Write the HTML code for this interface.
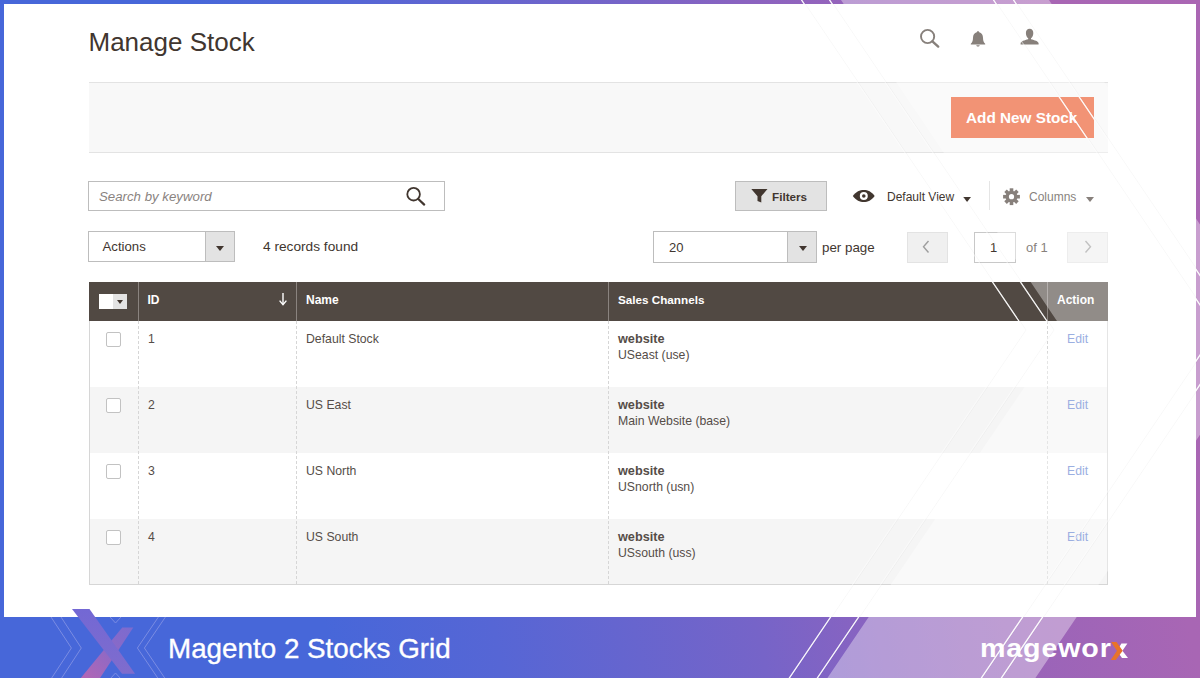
<!DOCTYPE html>
<html><head><meta charset="utf-8">
<style>
*{box-sizing:border-box;margin:0;padding:0}
html,body{width:1200px;height:678px;overflow:hidden}
body{position:relative;font-family:"Liberation Sans",sans-serif;color:#41362f;
 background:linear-gradient(78deg,#4767d9 0%,#4767d9 25%,#5666d5 37.5%,#7664c8 57.1%,#8a63c0 66%,#9a64b9 76.8%,#a866b4 89.3%,#aa66b3 100%)}
.abs{position:absolute}
#panel{position:absolute;left:4px;top:4px;width:1192px;height:613px;background:#fff}
.t{position:absolute;white-space:nowrap;line-height:1}
.cell{font-size:12.25px;color:#554d48}
.hd{font-size:12px;font-weight:bold;color:#fff}
.cb{width:15px;height:15px;border:1px solid #c2c2c2;border-radius:2px;background:#fff}
.tri{width:0;height:0;border-left:4px solid transparent;border-right:4px solid transparent;border-top:5px solid #41362f}
</style></head>
<body>
<div id="panel"></div>
<!-- title -->
<div class="t" style="left:88.5px;top:29px;font-size:26px;color:#41362f">Manage Stock</div>
<!-- header icons -->
<svg class="abs" style="left:915px;top:25px" width="130" height="26" viewBox="915 25 130 26">
 <circle cx="927.6" cy="36.5" r="6.6" fill="none" stroke="#41362f" stroke-width="1.9"/>
 <path d="M932.4 41.4L938.2 46.6" stroke="#41362f" stroke-width="2.4" stroke-linecap="round"/>
 <path d="M978 31.2c0.8 0 1.2 0.5 1.2 1.1c2.6 0.6 3.7 2.8 3.8 5.5c0.1 2.6 0.3 4.4 2.2 5.9v0.9h-14.4v-0.9c1.9-1.5 2.1-3.3 2.2-5.9c0.1-2.7 1.2-4.9 3.8-5.5c0-0.6 0.4-1.1 1.2-1.1z" fill="#41362f"/>
 <path d="M976.3 45.3h3.4c0 0.8-0.8 1.3-1.7 1.3s-1.7-0.5-1.7-1.3z" fill="#41362f"/>
 <path d="M1029.6 28.8c2.4 0 3.7 1.7 3.7 4.2c0 2.3-1 4.6-2.3 5.2v1.1c3.6 0.9 7.3 2 7.6 4v1.1h-18v-1.1c0.3-2 4-3.1 7.6-4v-1.1c-1.3-0.6-2.300-2.9-2.300-5.2c0-2.5 1.300-4.200 3.700-4.200z" fill="#41362f"/>
</svg>

<!-- action bar -->
<div class="abs" style="left:89px;top:82px;width:1019px;height:71px;background:#f8f8f8;border-top:1px solid #e3e3e3;border-bottom:1px solid #e3e3e3"></div>
<div class="abs" style="left:951px;top:97px;width:143px;height:41px;background:#eb5525"></div>
<div class="t" style="left:966px;top:110px;font-size:15.3px;font-weight:bold;color:#fff">Add New Stock</div>

<!-- search -->
<div class="abs" style="left:88px;top:181px;width:357px;height:30px;border:1px solid #bdbdbd;background:#fff"></div>
<div class="t" style="left:99px;top:189.8px;font-size:13.25px;font-style:italic;color:#8a837f">Search by keyword</div>
<svg class="abs" style="left:403px;top:185px" width="26" height="24" viewBox="403 185 26 24">
 <circle cx="413.6" cy="194.2" r="6.3" fill="none" stroke="#41362f" stroke-width="1.8"/>
 <path d="M418.3 199L424.2 204.6" stroke="#41362f" stroke-width="2.2" stroke-linecap="round"/>
</svg>

<!-- filters / view / columns -->
<div class="abs" style="left:735px;top:181px;width:92px;height:30px;border:1px solid #bdbdbd;background:#e3e3e3"></div>
<svg class="abs" style="left:750px;top:188px" width="19" height="16" viewBox="750 188 19 16">
 <path d="M751.3 189H767.5L761.3 196.2V202.6L757.5 201V196.2Z" fill="#41362f"/>
</svg>
<div class="t" style="left:772px;top:190.9px;font-size:11.7px;font-weight:bold;color:#41362f">Filters</div>
<svg class="abs" style="left:851px;top:188px" width="26" height="16" viewBox="851 188 26 16">
 <path d="M852.8 196C856 191.6 859.8 190 863.8 190S871.5 191.6 874.7 196C871.5 200.4 867.8 202 863.8 202S856 200.4 852.8 196Z" fill="#41362f"/>
 <circle cx="863.8" cy="196" r="4" fill="#fff"/>
 <circle cx="863.8" cy="196" r="1.8" fill="#41362f"/>
</svg>
<div class="t" style="left:887px;top:191.2px;font-size:12px;color:#41362f">Default View</div>
<div class="abs tri" style="left:962.5px;top:196.5px;border-top-color:#41362f"></div>
<div class="abs" style="left:989px;top:181px;width:1px;height:29px;background:#d6d6d6"></div>
<svg class="abs" style="left:1001px;top:186px" width="22" height="22" viewBox="0 0 22 22">
 <g transform="translate(10.5 10.7)" fill="#41362f">
  <circle r="5.9"/>
  <rect x="-1.8" y="-8.4" width="3.6" height="16.8"/>
  <rect x="-1.8" y="-8.4" width="3.6" height="16.8" transform="rotate(45)"/>
  <rect x="-1.8" y="-8.4" width="3.6" height="16.8" transform="rotate(90)"/>
  <rect x="-1.8" y="-8.4" width="3.6" height="16.8" transform="rotate(135)"/>
  <circle r="2.6" fill="#fff"/>
 </g>
</svg>
<div class="t" style="left:1029px;top:191.2px;font-size:12px;color:#41362f">Columns</div>
<div class="abs tri" style="left:1085.5px;top:196.5px;border-top-color:#41362f"></div>

<!-- actions select -->
<div class="abs" style="left:88px;top:231px;width:147px;height:31px;border:1px solid #bdbdbd;background:#fff"></div>
<div class="abs" style="left:205px;top:231px;width:30px;height:31px;border:1px solid #bdbdbd;background:#e3e3e3"></div>
<div class="abs tri" style="left:215.5px;top:245.5px;border-top-color:#41362f"></div>
<div class="t" style="left:102.5px;top:239.8px;font-size:13.2px;color:#41362f">Actions</div>
<div class="t" style="left:263px;top:240.4px;font-size:13.7px;color:#41362f">4 records found</div>

<!-- per page / pager -->
<div class="abs" style="left:653px;top:231px;width:164px;height:32px;border:1px solid #bdbdbd;background:#fff"></div>
<div class="abs" style="left:787px;top:231px;width:30px;height:32px;border:1px solid #bdbdbd;background:#e3e3e3"></div>
<div class="abs tri" style="left:798.5px;top:246px;border-top-color:#41362f"></div>
<div class="t" style="left:669px;top:241px;font-size:13px;color:#41362f">20</div>
<div class="t" style="left:822px;top:241px;font-size:13.35px;color:#41362f">per page</div>
<div class="abs" style="left:907px;top:232px;width:41px;height:31px;border:1px solid #e3e3e3;background:#f0f0f0"></div>
<svg class="abs" style="left:919px;top:239px" width="14" height="16" viewBox="0 0 14 16"><path d="M9.5 2L4.5 7.8L9.5 13.5" fill="none" stroke="#9e9e9e" stroke-width="1.4"/></svg>
<div class="abs" style="left:974px;top:232px;width:42px;height:31px;border:1px solid #c8c8c8;background:#fff"></div>
<div class="t" style="left:990px;top:241px;font-size:13px;color:#41362f">1</div>
<div class="t" style="left:1026px;top:241px;font-size:13px;color:#41362f">of 1</div>
<div class="abs" style="left:1067px;top:232px;width:41px;height:31px;border:1px solid #e3e3e3;background:#f0f0f0"></div>
<svg class="abs" style="left:1081px;top:239px" width="14" height="16" viewBox="0 0 14 16"><path d="M4.5 2L9.5 7.8L4.5 13.5" fill="none" stroke="#9e9e9e" stroke-width="1.4"/></svg>

<!-- table header -->
<div class="abs" style="left:89px;top:282px;width:1019px;height:39px;background:#514943"></div>
<div class="abs" style="left:138px;top:282px;width:1px;height:39px;background:#8a837f"></div>
<div class="abs" style="left:296px;top:282px;width:1px;height:39px;background:#8a837f"></div>
<div class="abs" style="left:608px;top:282px;width:1px;height:39px;background:#8a837f"></div>
<div class="abs" style="left:1047px;top:282px;width:1px;height:39px;background:#8a837f"></div>
<div class="abs" style="left:99px;top:294px;width:14px;height:15px;background:#fff"></div>
<div class="abs" style="left:113px;top:294px;width:14px;height:15px;background:#e3e3e3"></div>
<div class="abs tri" style="left:116.5px;top:300px;border-left-width:3.5px;border-right-width:3.5px;border-top-width:4px;border-top-color:#41362f"></div>
<div class="t hd" style="left:147.5px;top:294.1px">ID</div>
<div class="t hd" style="left:306px;top:294.1px">Name</div>
<div class="t hd" style="left:618px;top:294.1px;font-size:11.7px">Sales Channels</div>
<div class="t hd" style="left:1057px;top:294.1px">Action</div>
<svg class="abs" style="left:278px;top:292px" width="10" height="14" viewBox="0 0 10 14"><path d="M5 1V12" stroke="#fff" stroke-width="1.4"/><path d="M1.6 8.6L5 12.6L8.4 8.6" fill="none" stroke="#fff" stroke-width="1.4"/></svg>
<!-- table body -->
<div class="abs" style="left:89px;top:321px;width:1019px;height:66px;background:#fff"></div>
<div class="abs" style="left:89px;top:387px;width:1019px;height:66px;background:#f5f5f5"></div>
<div class="abs" style="left:89px;top:453px;width:1019px;height:66px;background:#fff"></div>
<div class="abs" style="left:89px;top:519px;width:1019px;height:65px;background:#f5f5f5"></div>
<div class="abs" style="left:89px;top:321px;width:1019px;height:264px;border:1px solid #d6d6d6;border-top:0"></div>
<div class="abs" style="left:138px;top:321px;width:0;height:263px;border-left:1px dashed #d6d6d6"></div>
<div class="abs" style="left:296px;top:321px;width:0;height:263px;border-left:1px dashed #d6d6d6"></div>
<div class="abs" style="left:608px;top:321px;width:0;height:263px;border-left:1px dashed #d6d6d6"></div>
<div class="abs" style="left:1047px;top:321px;width:0;height:263px;border-left:1px dashed #d6d6d6"></div>
<div class="abs cb" style="left:106px;top:332px"></div>
<div class="t cell" style="left:148px;top:333.4px">1</div>
<div class="t cell" style="left:306px;top:333.4px">Default Stock</div>
<div class="t cell" style="left:618px;top:333.0px;font-weight:bold;font-size:12.7px">website</div>
<div class="t cell" style="left:618px;top:349.2px">USeast (use)</div>
<div class="t cell" style="left:1067px;top:333.4px;color:#6180d0">Edit</div>
<div class="abs cb" style="left:106px;top:398px"></div>
<div class="t cell" style="left:148px;top:399.4px">2</div>
<div class="t cell" style="left:306px;top:399.4px">US East</div>
<div class="t cell" style="left:618px;top:399.0px;font-weight:bold;font-size:12.7px">website</div>
<div class="t cell" style="left:618px;top:415.2px">Main Website (base)</div>
<div class="t cell" style="left:1067px;top:399.4px;color:#6180d0">Edit</div>
<div class="abs cb" style="left:106px;top:464px"></div>
<div class="t cell" style="left:148px;top:465.4px">3</div>
<div class="t cell" style="left:306px;top:465.4px">US North</div>
<div class="t cell" style="left:618px;top:465.0px;font-weight:bold;font-size:12.7px">website</div>
<div class="t cell" style="left:618px;top:481.2px">USnorth (usn)</div>
<div class="t cell" style="left:1067px;top:465.4px;color:#6180d0">Edit</div>
<div class="abs cb" style="left:106px;top:530px"></div>
<div class="t cell" style="left:148px;top:531.4px">4</div>
<div class="t cell" style="left:306px;top:531.4px">US South</div>
<div class="t cell" style="left:618px;top:531.0px;font-weight:bold;font-size:12.7px">website</div>
<div class="t cell" style="left:618px;top:547.2px">USsouth (uss)</div>
<div class="t cell" style="left:1067px;top:531.4px;color:#6180d0">Edit</div>
<!-- overlay band -->
<div class="abs" style="left:0;top:0;width:1200px;height:678px;background:rgba(255,255,255,0.37);clip-path:polygon(841px 0px,1049px 0px,1271px 330px,1035.4px 678px,827.4px 678px,1063px 330px);pointer-events:none"></div>
<svg class="abs" style="left:0;top:0" width="1200" height="678" viewBox="0 0 1200 678">
 <defs>
  <clipPath id="strong">
   <rect x="0" y="0" width="1200" height="4"/>
   <rect x="951" y="97" width="143" height="41"/>
   <rect x="89" y="282" width="1019" height="39"/>
   <rect x="0" y="617" width="1200" height="61"/>
   <rect x="1196" y="0" width="4" height="678"/>
  </clipPath>
  <path id="ln" d="M800.2 -2L1025 330L788.0 680M828.2 -2L1053 330L816.0 680M992.2 -2L1217 330L980.0 680M1012.2 -2L1237 330L1000.0 680"/>
 </defs>
 <use href="#ln" fill="none" stroke="#000" stroke-width="1" opacity="0.03" transform="translate(1 0)"/>
 <use href="#ln" fill="none" stroke="#fff" stroke-width="1.2" opacity="0.45"/>
 <use href="#ln" fill="none" stroke="#fff" stroke-width="1.2" opacity="0.9" clip-path="url(#strong)"/>
</svg>

<!-- bottom banner -->
<div class="t" style="left:168px;top:635.2px;font-size:27.8px;color:#fff;-webkit-text-stroke:0.35px #fff">Magento 2 Stocks Grid</div>
<svg class="abs" style="left:0;top:600px" width="200" height="78" viewBox="0 600 200 78">
 <g fill="none" stroke="#8896e6" stroke-width="1" opacity="0.8">
  <path d="M51 617L71.4 648L51 679"/>
  <path d="M61 617L81.3 648L61 679"/>
  <path d="M158.4 617L137.4 648L158.4 679"/>
  <path d="M165.4 617L144.4 648L165.4 679"/>
  <path d="M110 617L115.5 623L121 617"/>
  <path d="M110 679L115.5 673L121 679"/>
 </g>
 <defs><linearGradient id="xg1" x1="0" y1="0" x2="0" y2="1"><stop offset="0" stop-color="#7368d4"/><stop offset="1" stop-color="#7f6ccd"/></linearGradient>
 <linearGradient id="xg2" x1="1" y1="0" x2="0" y2="1"><stop offset="0" stop-color="#7a6bd0"/><stop offset="0.45" stop-color="#8c69c6"/><stop offset="1" stop-color="#b466b4"/></linearGradient></defs>
 <path d="M122.2 627.4H133.3L100 678H80.8Z" fill="url(#xg2)"/>
 <path d="M72 609H89.5L135 673.7H122Z" fill="url(#xg1)"/>
</svg>
<div class="t" style="left:980.3px;top:635.3px;font-size:26.5px;font-weight:bold;color:#fff;letter-spacing:0.8px;transform:scaleX(1.08);transform-origin:0 0">magewor</div>
<svg class="abs" style="left:1100px;top:638px" width="32" height="26" viewBox="1100 638 32 26">
 <path d="M1121.4 643.5H1127.4L1122.4 650.8L1128 658H1122L1118 652.3V649.3Z" fill="#fff"/>
 <path d="M1111.1 641.9H1116.5L1122.7 650.8L1115.7 659.9H1110.7L1116.9 650.8Z" fill="#e8732a"/>
</svg>

</body></html>
